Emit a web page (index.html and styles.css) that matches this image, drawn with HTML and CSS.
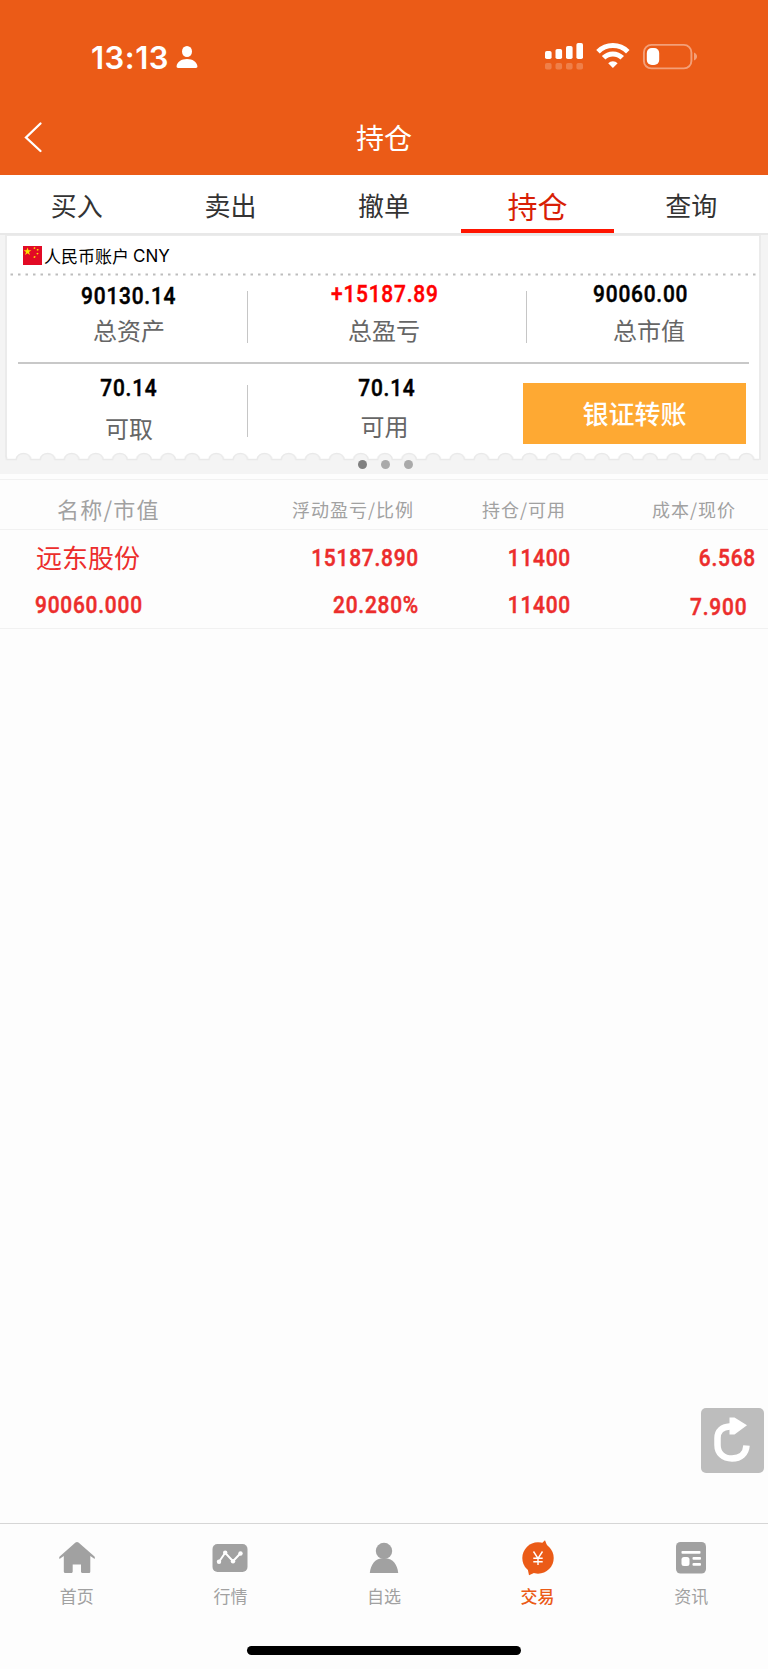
FILE: index.html
```html
<!DOCTYPE html>
<html lang="zh-CN">
<head>
<meta charset="utf-8">
<title>持仓</title>
<link rel="stylesheet" href="styles.css">
</head>
<body>
<div class="app">
  <header class="header">
    <div class="status">
      <span class="time">13:13</span>
      <svg class="person" width="22" height="24" viewBox="0 0 22 24" fill="#fff"><ellipse cx="11" cy="6.5" rx="5" ry="5.5"/><path d="M2.2 23C1 23 .4 22.300 .6 21 1.200 16.800 5.500 14 11 14s9.800 2.800 10.400 7c.2 1.300-.4 2-1.600 2z"/></svg>
      <svg class="signals" width="154" height="28" viewBox="0 0 154 28">
        <g fill="#fff"><rect x="0" y="9" width="6.600" height="8" rx="1.800"/><rect x="10.500" y="7" width="6.600" height="10" rx="1.800"/><rect x="21" y="4" width="6.600" height="13" rx="1.800"/><rect x="31.400" y="1" width="6.600" height="16" rx="1.800"/></g>
        <g fill="#fff" fill-opacity=".22"><rect x="0" y="21" width="6.600" height="6.500" rx="1.800"/><rect x="10.500" y="21" width="6.600" height="6.500" rx="1.800"/><rect x="21" y="21" width="6.600" height="6.500" rx="1.800"/><rect x="31.400" y="21" width="6.600" height="6.500" rx="1.800"/></g>
        <g fill="none" stroke="#fff" stroke-width="5"><path d="M53 9.800a21 21 0 0 1 29.800 0"/><path d="M58.600 15.800a13 13 0 0 1 18.600 0"/></g>
        <path d="M67.900 26l-4.700-4.700a6.700 6.700 0 0 1 9.400 0z" fill="#fff"/>
        <rect x="98.900" y="2.900" width="47.500" height="23.500" rx="7.500" fill="none" stroke="#fff" stroke-opacity=".42" stroke-width="1.900"/>
        <rect x="101.800" y="6" width="12.400" height="17" rx="5" fill="#fff"/>
        <path d="M149 10.500c4 1.500 4 6.500 0 8z" fill="#fff" fill-opacity=".42"/>
      </svg>
    </div>
    <div class="titlebar">
      <svg class="back" width="20" height="32" viewBox="0 0 20 32" fill="none" stroke="#fff" stroke-width="2.300" stroke-linecap="round"><path d="M16.500 2.500L2 16.500l14.500 13.500"/></svg>
      <h1 class="title">持仓</h1>
    </div>
  </header>
  <nav class="tabs">
    <span class="tab">买入</span><span class="tab">卖出</span><span class="tab">撤单</span><span class="tab active">持仓</span><span class="tab">查询</span>
  </nav>
  <section class="account">
    <div class="card">
      <div class="account-name">
        <svg width="19" height="19" viewBox="0 0 19 19"><path fill="#e20a25" d="M0 0h19v19H0z"/><path fill="#fde100" d="M4.500 1.500l1 2.800h2.900L6 6.100l.9 2.900-2.400-1.700L2.100 9 3 6.100.6 4.300h2.900zM11 1l1.500.7-.6 1.300-1.400-.6zM14 3l1.700.3-.6 1.500-1.400-.5zM14 6.700l1.600.5-.8 1.400-1.400-.6zM11 10l1.700.5-.8 1.500-1.500-.6z"/></svg>
        <span>人民币账户</span><span class="cny">CNY</span>
      </div>
      <svg class="dotted" width="750" height="3"><path d="M3.500 1.500h746" stroke="#bdbdbd" stroke-width="2.200" stroke-dasharray="2.500 5"/></svg>
      <div class="row totals">
        <div class="cell low"><b class="num">90130.14</b><span class="label">总资产</span></div>
        <div class="cell mid"><b class="num red">+15187.89</b><span class="label">总盈亏</span></div>
        <div class="cell last"><b class="num">90060.00</b><span class="label">总市值</span></div>
      </div>
      <div class="row cash">
        <div class="cell take"><b class="num">70.14</b><span class="label">可取</span></div>
        <div class="cell avail"><b class="num">70.14</b><span class="label">可用</span></div>
        <div class="action"><button class="transfer">银证转账</button></div>
      </div>
      <svg class="scallop" width="754" height="9">
        <defs><pattern id="bump" width="24.100" height="9" patternUnits="userSpaceOnUse" x="6.200"><path d="M-1 7.500h6C5.500 4 8.500 1.500 12.300 1.500s6.800 2.500 7.300 6h6v3H-1z" fill="#f4f4f4" stroke="#e9e9e9" stroke-width="1.500"/></pattern></defs>
        <rect width="754" height="9" fill="url(#bump)"/>
      </svg>
    </div>
    <div class="pager"><i class="on"></i><i></i><i></i></div>
  </section>
  <section class="holdings">
    <div class="line head"><span class="h-name">名称/市值</span><span>浮动盈亏/比例</span><span>持仓/可用</span><span>成本/现价</span></div>
    <div class="stock">
      <div class="line"><span class="name">远东股份</span><b class="num">15187.890</b><b class="num">11400</b><b class="num">6.568</b></div>
      <div class="line second"><b class="num">90060.000</b><b class="num">20.280%</b><b class="num">11400</b><b class="num price">7.900</b></div>
    </div>
  </section>
  <main class="space">
    <div class="refresh"><svg width="63" height="65" viewBox="0 0 63 65"><path d="M45.500 37.500C45 45 40 50.500 31 50.500S16.500 45 16.500 37v-7c0-7 4.500-11 12-11.500h3" fill="none" stroke="#fff" stroke-width="6.500"/><path d="M28.500 9.500h5L46 17.300 33.500 26.500h-5z" fill="#fff"/></svg></div>
  </main>
  <nav class="bottom">
    <div class="item"><svg width="38" height="38" viewBox="0 0 38 38"><path d="M19 3c.6 0 1 .2 1.500.6l16 14c.5.5.4 1.200.2 2.400L32.300 17v15.500c0 1-.6 1.500-1.500 1.500h-6.300c-1 0-1.500-.6-1.500-1.500V25.500h-8.300v7c0 .9-.5 1.500-1.500 1.500H7.300c-1 0-1.500-.6-1.500-1.500V17L1.500 20c-.4-1.200-.4-2 .2-2.500l15.800-13.900C18 3.200 18.400 3 19 3z"/></svg><span>首页</span></div>
    <div class="item"><svg width="38" height="38" viewBox="0 0 38 38"><rect x="1.500" y="5" width="35" height="28" rx="5"/><g fill="#fff"><path d="M8 22.800l6.200-9 7.800 8.400 7.500-7.900" fill="none" stroke="#fff" stroke-width="2"/><circle cx="8" cy="22.800" r="2.200"/><circle cx="14.200" cy="13.600" r="2.200"/><circle cx="22" cy="22.300" r="2.200"/><circle cx="29.500" cy="14.500" r="2.200"/></g></svg><span>行情</span></div>
    <div class="item"><svg width="38" height="38" viewBox="0 0 38 38"><circle cx="19" cy="12" r="8.200"/><path d="M4.800 34C5.500 25.500 10.500 19.500 17 19.500h4c6.500 0 11.500 6 12.200 14.500z"/></svg><span>自选</span></div>
    <div class="item active"><svg width="38" height="38" viewBox="0 0 38 38"><circle cx="19" cy="19" r="15.700"/><path d="M22.500 4.500l3.500-3.200 2.500 6.500zM8.500 29l1.500 7.300L16 33.500z"/><path d="M14.500 12.500L19 19.500l4.500-7M19 19v7M14.300 19.200h9.400M14.300 22.800h9.400" fill="none" stroke="#fff" stroke-width="1.400"/></svg><span>交易</span></div>
    <div class="item"><svg width="38" height="38" viewBox="0 0 38 38"><rect x="4" y="3" width="30" height="31.500" rx="4.500"/><g fill="#fff"><rect x="9.500" y="12" width="19" height="2.800" rx=".8"/><rect x="9.500" y="18" width="8" height="9" rx="2.500"/><rect x="20.500" y="18" width="8.500" height="2.800" rx="1"/><rect x="20.500" y="24" width="8.500" height="2.800" rx="1"/></g></svg><span>资讯</span></div>
  </nav>
  <div class="home-indicator"></div>
</div>
</body>
</html>
```
FILE: styles.css
```css
* { box-sizing: border-box; }
body { margin: 0; background: #fdfdfd; font-family: "Noto Sans CJK SC", sans-serif; }
svg { display: block; flex: none; }
.app { width: 768px; height: 1669px; display: flex; flex-direction: column; overflow: hidden; }

.header { height: 175px; flex: none; background: #eb5b17; color: #fff; }
.status { height: 100px; display: flex; align-items: flex-start; padding: 42px 0 0 91px; }
.time { width: 85px; font: 600 31px/31px Inter, sans-serif; letter-spacing: .5px; white-space: nowrap; }
.person { margin-top: 3px; }
.signals { margin-left: 347px; }
.titlebar { display: grid; grid-template-columns: 60px 1fr 60px; align-items: center; height: 73px; }
.back { margin-left: 24px; }
.title { margin: 0; text-align: center; font-size: 28px; line-height: 36px; font-weight: 400; }

.tabs { height: 58px; flex: none; display: grid; grid-template-columns: repeat(5, 1fr); background: #fff; color: #333; }
.tab { font-size: 26px; line-height: 60px; text-align: center; }
.tab.active { height: 58px; color: #d81e06; font-size: 30px; border-bottom: 4px solid #ff1400; }

.account { height: 241px; flex: none; background: #f4f4f4; border-top: 2px solid #e8e8e8; padding: 0 7px 0 5px; }
.card { height: 225px; background: #fff; border: solid #ebebeb; border-width: 1px 2px 0; display: flex; flex-direction: column; }
.account-name { height: 37px; flex: none; display: flex; align-items: center; padding: 2px 0 0 16px; font-size: 17px; line-height: 24px; color: #000; }
.account-name svg { margin-right: 2px; }
.cny { margin-left: 4px; font-family: Inter, sans-serif; font-size: 17px; }
.dotted { flex: none; }
.row { display: grid; grid-template-columns: 241px 278px 1fr; }
.totals { height: 88px; flex: none; margin: 0 10px 0 11px; border-bottom: 2px solid #c8c8c8; grid-template-columns: 230px 279px 1fr; }
.cell { position: relative; display: flex; flex-direction: column; align-items: center; }
.num { font: 500 24px/25px Roboto, sans-serif; letter-spacing: .9px; -webkit-text-stroke: .5px; color: #000; transform: scaleX(.87); white-space: nowrap; }
.red { color: #f00; }
.label { font-size: 24px; line-height: 30px; color: #666; }
.totals .cell { padding-top: 6px; }
.totals .label { margin-top: 8px; }
.totals .low { padding: 8px 8px 0 0; }
.totals .low .label { margin-top: 6px; }
.totals .mid { padding-right: 5px; }
.totals .mid .label { margin-right: 2px; }
.totals .last { padding-left: 22px; }
.last .num { margin-right: 17px; }
.low::after, .mid::after, .take::after { content: ""; position: absolute; right: 0; top: 15px; width: 1.500px; height: 52px; background: #c6c6c6; }
.cash { height: 88px; flex: none; }
.cash .cell { padding: 12px 0 0 3px; }
.cash .label { margin-top: 12px; }
.cash .take::after { top: 21px; }
.cash .avail { padding-right: 3px; }
.cash .avail .label { margin: 10px 5px 0 0; }
.action { padding: 19px 0 0; margin-left: -3px; }
.transfer { display: block; width: 223px; height: 61px; padding: 0 0 2px; border: 0; border-radius: 0; background: #fea933; color: #fff; font: 500 26px/58px "Noto Sans CJK SC", sans-serif; }
.scallop { margin: 0 0 0 -2px; }
.pager { display: flex; justify-content: center; gap: 14px; padding-left: 4px; }
.pager i { width: 9px; height: 9px; border-radius: 50%; background: #aaa; }
.pager .on { background: #808080; }

.holdings { padding-top: 5px; flex: none; color: #a1a1a1; }
.line { display: grid; grid-template-columns: 205px 214px 152px 185px; }
.line > * { text-align: right; }
.line > :first-child { text-align: left; }
.head { height: 51px; border: solid #f1f1f1; border-width: 1px 0; font-size: 18px; line-height: 58px; letter-spacing: 1px; }
.head span { white-space: nowrap; }
.head .h-name { padding-left: 57px; font-size: 22px; line-height: 56px; letter-spacing: 1.2px; }
.head span:nth-child(2) { padding-right: 5px; }
.head span:nth-child(3) { padding-right: 5px; }
.head span:nth-child(4) { padding-right: 20px; }
.stock { height: 99px; border-bottom: 1px solid #f1f1f1; color: #ec2d2c; padding-top: 14px; }
.stock .line { height: 47px; }
.stock .name { padding-left: 36px; font-size: 26px; line-height: 26px; }
.stock .num { color: inherit; line-height: 28px; transform-origin: right; }
.stock .num:first-child { margin-left: 35px; transform-origin: left; }
.stock .price { padding: 2px 10px 0 0; }

.space { flex: 1; display: flex; align-items: flex-end; justify-content: flex-end; padding: 0 4px 50px; }
.refresh { width: 63px; height: 65px; border-radius: 5px; background: #bdbdbd; }

.bottom { height: 123px; flex: none; display: grid; grid-template-columns: repeat(5, 1fr); border-top: 1px solid #d6d6d6; padding-top: 15px; color: #a1a1a1; }
.item { display: flex; flex-direction: column; align-items: center; font-size: 17px; line-height: 24px; fill: #a1a1a1; }
.item span { margin-top: 7px; }
.item.active { color: #eb5b17; fill: #eb5b17; font-weight: 500; }
.home-indicator { flex: none; width: 274px; height: 9px; border-radius: 5px; background: #000; margin: 0 0 14px 247px; }
```
